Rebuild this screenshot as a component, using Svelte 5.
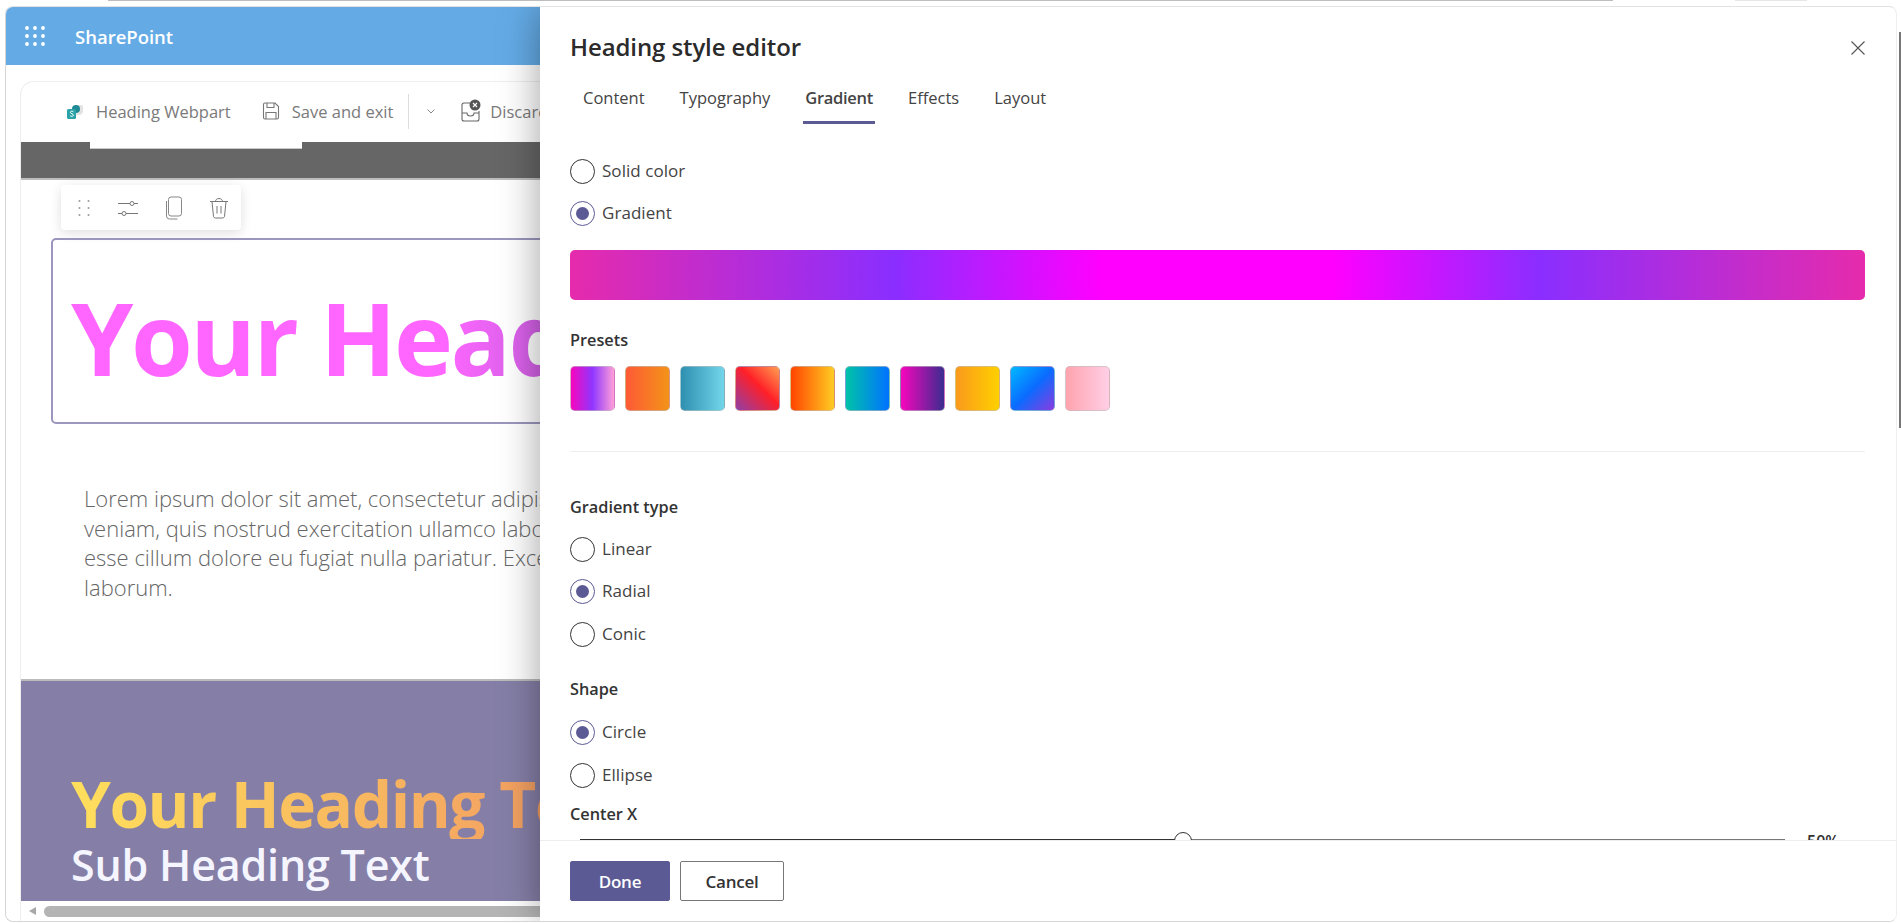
<script lang="ts">
	const tabs = ['Content', 'Typography', 'Gradient', 'Effects', 'Layout'];
	const presets = [
		'linear-gradient(90deg, #f706bd, #8f36ff 50%, #ff9fd8)',
		'linear-gradient(90deg, #ff5a36, #f39318)',
		'linear-gradient(90deg, #2e8fb0, #72d6ea)',
		'linear-gradient(45deg, #8f3fa8, #ff2028 55%, #ff9f50)',
		'linear-gradient(90deg, #ff4400, #ffcc22)',
		'linear-gradient(90deg, #00c2a8, #0072ff)',
		'linear-gradient(90deg, #f706bd, #3b2c8f)',
		'linear-gradient(90deg, #fa9a1c, #ffd000)',
		'linear-gradient(135deg, #00b8ff, #0a6cff 50%, #8a3be0)',
		'linear-gradient(90deg, #ffa3ae, #ffcfe6)'
	];

	let activeTab = $state('Gradient');
	let fill = $state('Gradient');
	let gradientType = $state('Radial');
	let shape = $state('Circle');
</script>

{#snippet radio(group: string, label: string, checked: boolean, pick: () => void)}
	<label class="radio">
		<input type="radio" name={group} {checked} onchange={pick} />
		<span>{label}</span>
	</label>
{/snippet}

<div class="root">
	<div class="browser-strip">
		<div class="strip-bar"></div>
		<div class="strip-pill"></div>
	</div>

	<div class="window">
		<div class="site">
			<header class="suite-bar">
				<svg class="waffle" width="20" height="20" viewBox="0 0 20 20" fill="#fff">
					{#each [2, 10, 18] as y}
						{#each [2, 10, 18] as x}
							<circle cx={x} cy={y} r="1.9" />
						{/each}
					{/each}
				</svg>
				<span class="brand">SharePoint</span>
			</header>

			<div class="page-wrap">
				<div class="page">
					<div class="command-bar">
						<span class="cmd">
							<svg width="18" height="18" viewBox="0 0 18 18">
								<path d="M9 3h6a2 2 0 0 1 2 2v5a4 4 0 0 1-4 3H9z" fill="#e3e3e3" />
								<circle cx="10" cy="7" r="4" fill="#1f8a94" />
								<rect x="1" y="7" width="9" height="10" rx="1.5" fill="#2aa3a8" />
								<path d="M7.4 9.6c-1.6-.8-3-.3-3 .8 0 1.500 3 1.100 3 2.800 0 1.200-1.700 1.500-3.200.7" fill="none" stroke="#fff" stroke-width="1" />
							</svg>
							Heading Webpart
						</span>
						<span class="cmd save">
							<svg width="18" height="18" viewBox="0 0 18 18" fill="none" stroke="#777" stroke-width="1.1">
								<path d="M2.500 1h10.500l3.500 3.500v11a1.500 1.500 0 0 1-1.500 1.500h-12a1.500 1.500 0 0 1-1.500-1.500v-13a1.500 1.500 0 0 1 1.500-1.500z" />
								<path d="M5 1v4.500h7V1M4 17v-6.500h10V17" />
							</svg>
							Save and exit
						</span>
						<span class="cmd-divider"></span>
						<svg class="chevron" width="10" height="10" viewBox="0 0 10 10" fill="none" stroke="#888">
							<path d="M1.500 3.500 5 7l3.500-3.500" />
						</svg>
						<span class="cmd discard">
							<svg width="20" height="24" viewBox="0 0 20 24" fill="none" stroke="#666" stroke-width="1.1">
								<path d="M9 4H3a2 2 0 0 0-2 2v14a2 2 0 0 0 2 2h13a2 2 0 0 0 2-2v-8" />
								<path d="M1 14h5c0 4 7 4 7 0h5" />
								<circle cx="14" cy="6" r="5.500" fill="#555" stroke="none" />
								<path d="m12 4 4 4m0-4-4 4" stroke="#fff" />
							</svg>
							Discard changes
						</span>
					</div>

					<div class="band">
						<div class="band-notch"></div>
					</div>

					<div class="section-tools">
						<svg width="14" height="20" viewBox="0 0 14 20" fill="#999">
							{#each [3, 10, 17] as y}
								<circle cx="2.500" cy={y} r="1" />
								<circle cx="11.500" cy={y} r="1" />
							{/each}
						</svg>
						<svg width="22" height="22" viewBox="0 0 22 22" fill="none" stroke="#777">
							<path d="M1 6.500h12M17 6.500h4M1 16.500h4M9 16.500h12" />
							<circle cx="15" cy="6.500" r="2" />
							<circle cx="7" cy="16.500" r="2" />
						</svg>
						<svg width="18" height="24" viewBox="0 0 18 24" fill="none" stroke="#888">
							<rect x="3.500" y="1" width="13" height="19" rx="2.500" />
							<path d="M1.500 5v15a3 3 0 0 0 3 3h8" />
						</svg>
						<svg width="20" height="22" viewBox="0 0 20 22" fill="none" stroke="#777">
							<path d="M1 4.500h18M6.500 4.500C6.500 .5 13.500 .5 13.500 4.500M3 4.500l1.500 15a2 2 0 0 0 2 1.500h7a2 2 0 0 0 2-1.500l1.500-15M8 9v7.500M12 9v7.500" />
						</svg>
					</div>

					<div class="heading-box">
						<h1 class="hero-title">Your Heading Text</h1>
					</div>

					<p class="lorem">
						Lorem ipsum dolor sit amet, consectetur adipiscing elit, sed do eiusmod tempor incididunt ut labore et dolore magna aliqua. Ut enim ad minim<br />
						veniam, quis nostrud exercitation ullamco laboris nisi ut aliquip ex ea commodo consequat. Duis aute irure dolor in reprehenderit in voluptate velit<br />
						esse cillum dolore eu fugiat nulla pariatur. Excepteur sint occaecat cupidatat non proident, sunt in culpa qui officia deserunt mollit anim id est<br />
						laborum.
					</p>

					<section class="hero-band">
						<h2 class="band-title">Your Heading Text</h2>
						<div class="band-sub">Sub Heading Text</div>
					</section>

					<div class="h-scroll">
						<span class="scroll-arrow"></span>
						<span class="scroll-thumb"></span>
					</div>
				</div>
			</div>
		</div>

		<aside class="drawer">
			<div class="drawer-head">
				<h2>Heading style editor</h2>
				<button class="close" aria-label="Close">
					<svg width="14" height="14" viewBox="0 0 14 14" fill="none" stroke="#555" stroke-width="1.1">
						<path d="m0.500 0.500 13 13m0-13-13 13" />
					</svg>
				</button>
			</div>

			<nav class="tabs">
				{#each tabs as tab}
					<button class="tab" class:active={activeTab === tab} onclick={() => (activeTab = tab)}>{tab}</button>
				{/each}
			</nav>

			<div class="drawer-body">
				{@render radio('fill', 'Solid color', fill === 'Solid color', () => (fill = 'Solid color'))}
				{@render radio('fill', 'Gradient', fill === 'Gradient', () => (fill = 'Gradient'))}

				<div class="gradient-preview"></div>

				<div class="field-label presets-label">Presets</div>
				<div class="presets">
					{#each presets as preset}
						<button class="swatch" style="background: {preset}" aria-label="Preset"></button>
					{/each}
				</div>

				<hr class="divider" />

				<div class="field-label type-label">Gradient type</div>
				<div class="radio-group">
					{#each ['Linear', 'Radial', 'Conic'] as type}
						{@render radio('type', type, gradientType === type, () => (gradientType = type))}
					{/each}
				</div>

				<div class="field-label shape-label">Shape</div>
				<div class="radio-group">
					{#each ['Circle', 'Ellipse'] as s}
						{@render radio('shape', s, shape === s, () => (shape = s))}
					{/each}
				</div>

				<div class="field-label center-label">Center X</div>
				<div class="slider">
					<div class="track">
						<div class="track-fill" style="width: 50%"></div>
						<div class="thumb" style="left: 50%"></div>
					</div>
					<span class="slider-value">50%</span>
				</div>
			</div>

			<footer class="drawer-foot">
				<button class="btn primary">Done</button>
				<button class="btn">Cancel</button>
			</footer>
		</aside>
	</div>

	<div class="page-scrollbar"></div>
</div>

<style>
	:global(body) {
		margin: 0;
		background: #fff;
		overflow: hidden;
	}

	.root {
		position: relative;
		width: 1901px;
		height: 923px;
		display: flex;
		flex-direction: column;
		background: #fff;
		font-family: 'Open Sans', 'Noto Sans', sans-serif;
		color: #333;
	}

	.browser-strip {
		height: 6px;
		flex: none;
		display: flex;
		align-items: flex-start;
	}

	.strip-bar {
		margin-left: 108px;
		width: 1505px;
		height: 1px;
		background: #bdbdbd;
	}

	.strip-pill {
		margin-left: 122px;
		width: 72px;
		height: 1px;
		background: #e6e6e6;
	}

	.page-scrollbar {
		position: absolute;
		top: 32px;
		right: 0;
		width: 2px;
		height: 396px;
		background: #777;
	}

	.window {
		flex: 1;
		min-height: 0;
		margin: 0 4px 1px 5px;
		display: flex;
		border: 1px solid #d6d6d6;
		border-top-color: #e2e2e2;
		border-right-color: #efefef;
		border-radius: 8px;
		overflow: hidden;
	}

	.site {
		width: 534px;
		flex: none;
		display: flex;
		flex-direction: column;
		overflow: hidden;
	}

	.suite-bar {
		height: 58px;
		flex: none;
		width: 534px;
		background: #64abe6;
		display: flex;
		align-items: center;
		color: #fff;
	}

	.waffle {
		margin-left: 19px;
	}

	.brand {
		margin-left: 30px;
		font-size: 18.500px;
		font-weight: 600;
	}

	.page-wrap {
		flex: 1;
		min-height: 0;
		padding: 16px 0 0 14px;
	}

	.page {
		width: 1800px;
		height: 100%;
		display: flex;
		flex-direction: column;
		box-sizing: border-box;
		border-top: 1px solid #eee;
		border-left: 1px solid #eee;
		border-top-left-radius: 14px;
		overflow: hidden;
	}

	.command-bar {
		height: 60px;
		flex: none;
		display: flex;
		align-items: center;
		padding: 0 0 2px 45px;
		box-sizing: border-box;
		color: #7a7a7a;
		font-size: 16.500px;
	}

	.cmd {
		display: inline-flex;
		align-items: center;
		gap: 12px;
		white-space: nowrap;
	}

	.save {
		margin-left: 31px;
	}

	.cmd-divider {
		width: 1px;
		height: 35px;
		margin-left: 15px;
		background: #ddd;
	}

	.chevron {
		margin-left: 17px;
	}

	.discard {
		margin-left: 25px;
		gap: 9px;
	}

	.band {
		height: 36px;
		flex: none;
		background: #666;
		border-bottom: 2px solid #bdbdbd;
	}

	.band-notch {
		width: 212px;
		height: 7px;
		margin-left: 69px;
		background: #fff;
		border-bottom: 1px solid #c8c8c8;
		box-sizing: border-box;
	}

	.section-tools {
		width: 180px;
		height: 45px;
		margin: 5px 0 0 40px;
		flex: none;
		background: #fff;
		border-radius: 4px;
		box-shadow: 0 3px 12px rgba(0, 0, 0, 0.13);
		display: flex;
		align-items: center;
		gap: 26px;
		padding-left: 16px;
		box-sizing: border-box;
	}

	.heading-box {
		width: 1700px;
		height: 186px;
		flex: none;
		margin: 8px 0 0 30px;
		box-sizing: border-box;
		border: 2px solid #9a96bd;
		border-radius: 5px;
		padding: 12px 0 0 18px;
		display: flex;
		align-items: center;
	}

	.hero-title {
		margin: 0;
		font-size: 100px;
		font-weight: 700;
		line-height: 1.2;
		letter-spacing: -2.500px;
		white-space: nowrap;
		background: linear-gradient(90deg, #ff66ff 370px, #c85fe0 490px);
		-webkit-background-clip: text;
		background-clip: text;
		color: transparent;
	}

	.lorem {
		margin: 60px 0 0 63px;
		flex: none;
		font-size: 22px;
		font-weight: 300;
		line-height: 29.500px;
		color: #666;
		white-space: nowrap;
	}

	.hero-band {
		flex: 1;
		min-height: 0;
		margin-top: 77px;
		border-top: 2px solid #bbb;
		background: #857fa7;
		padding: 0 0 11px 50px;
		display: flex;
		flex-direction: column;
		justify-content: flex-end;
	}

	.band-title {
		margin: 0 0 1px;
		font-size: 64px;
		font-weight: 700;
		line-height: 70px;
		letter-spacing: -1.500px;
		white-space: nowrap;
		width: max-content;
		background: linear-gradient(90deg, #ffdf5c 0, #f39f62 470px);
		-webkit-background-clip: text;
		background-clip: text;
		color: transparent;
	}

	.band-sub {
		font-size: 43px;
		font-weight: 600;
		line-height: 50px;
		letter-spacing: -0.200px;
		color: #f5f5ff;
	}

	.h-scroll {
		height: 20px;
		flex: none;
		display: flex;
		align-items: center;
		background: #fff;
	}

	.scroll-arrow {
		margin-left: 8px;
		width: 0;
		height: 0;
		border: 4px solid transparent;
		border-left: 0;
		border-right: 7px solid #a8a8a8;
	}

	.scroll-thumb {
		margin-left: 8px;
		width: 1700px;
		height: 11px;
		border-radius: 6px;
		background: #b4b4b4;
	}

	.drawer {
		flex: 1;
		min-width: 0;
		position: relative;
		z-index: 1;
		background: #fff;
		box-shadow: 0 0 38px rgba(0, 0, 0, 0.38);
		display: flex;
		flex-direction: column;
	}

	.drawer-head {
		height: 73px;
		flex: none;
		padding: 0 31px 0 30px;
		display: flex;
		align-items: flex-start;
		justify-content: space-between;
	}

	.drawer-head h2 {
		margin: 24px 0 0;
		font-size: 24px;
		font-weight: 600;
		line-height: 32px;
		color: #2b2b2b;
		letter-spacing: -0.1px;
	}

	.close {
		margin-top: 34px;
		padding: 0;
		border: 0;
		background: none;
		line-height: 0;
	}

	.tabs {
		height: 44px;
		flex: none;
		display: flex;
		gap: 35px;
		padding-left: 43px;
	}

	.tab {
		position: relative;
		padding: 0 0 10px;
		border: 0;
		background: none;
		font: inherit;
		font-size: 16.500px;
		color: #444;
	}

	.tab.active {
		font-weight: 600;
		letter-spacing: -0.3px;
	}

	.tab.active::after {
		content: '';
		position: absolute;
		left: -2px;
		right: -2px;
		bottom: 0;
		height: 3px;
		background: #5b5a95;
	}

	.drawer-body {
		flex: 1;
		min-height: 0;
		overflow: hidden;
		padding: 26px 31px 0 30px;
	}

	.radio {
		height: 42px;
		display: flex;
		align-items: center;
		gap: 7px;
		font-size: 17px;
		letter-spacing: 0.05px;
		color: #444;
	}

	.radio span {
		margin-bottom: 2px;
	}

	.radio-group .radio {
		height: 42.500px;
	}

	.radio input {
		appearance: none;
		width: 25px;
		height: 25px;
		margin: 0;
		border: 1px solid #333;
		border-radius: 50%;
		background: #fff;
		box-sizing: border-box;
		display: grid;
		place-items: center;
	}

	.radio input:checked {
		border-color: #5b5a95;
	}

	.radio input:checked::before {
		content: '';
		width: 13px;
		height: 13px;
		border-radius: 50%;
		background: #5b5a95;
	}

	.gradient-preview {
		height: 50px;
		margin-top: 16px;
		border-radius: 5px;
		background: radial-gradient(circle at 50% 50%, #ff00ff 18%, #8a2eff 50%, #e62bac 100%);
	}

	.field-label {
		height: 20px;
		font-size: 16.300px;
		font-weight: 600;
		line-height: 20px;
		color: #333;
	}

	.presets-label {
		margin-top: 30px;
	}

	.presets {
		margin-top: 16px;
		display: flex;
		gap: 10px;
	}

	.swatch {
		width: 45px;
		height: 45px;
		padding: 0;
		border: 1px solid rgba(190, 190, 190, 0.6);
		background-clip: border-box;
		border-radius: 5px;
	}

	.divider {
		margin: 40px 0 0;
		border: 0;
		border-top: 1px solid #eee;
	}

	.type-label {
		margin-top: 45px;
	}

	.radio-group {
		margin-top: 11px;
	}

	.shape-label {
		margin-top: 23px;
	}

	.shape-label + .radio-group {
		margin-top: 13px;
	}

	.center-label {
		margin-top: 7px;
	}

	.slider {
		margin: 6.500px 0 0 10px;
		height: 20px;
		display: flex;
		align-items: center;
		gap: 22px;
	}

	.track {
		flex: 1;
		height: 2px;
		position: relative;
		background: #777;
	}

	.track-fill {
		height: 100%;
		background: #333;
	}

	.thumb {
		position: absolute;
		top: calc(50% + 1px);
		width: 18px;
		height: 18px;
		border: 1.500px solid #333;
		border-radius: 50%;
		background: #fff;
		box-sizing: border-box;
		transform: translate(-50%, -50%);
	}

	.slider-value {
		width: 58px;
		padding-top: 2px;
		font-size: 16px;
		font-weight: 600;
		color: #333;
	}

	.drawer-foot {
		height: 81px;
		flex: none;
		box-sizing: border-box;
		border-top: 1px solid #eee;
		padding: 20px 30px;
		display: flex;
		gap: 10px;
		background: #fff;
	}

	.btn {
		width: 104px;
		height: 40px;
		border: 1px solid #777;
		border-radius: 2px;
		background: #fff;
		font: inherit;
		font-size: 17px;
		font-weight: 600;
		letter-spacing: -0.2px;
		color: #333;
	}

	.btn.primary {
		width: 100px;
		border-color: #5b5a95;
		background: #5b5a95;
		color: #fff;
	}
</style>
